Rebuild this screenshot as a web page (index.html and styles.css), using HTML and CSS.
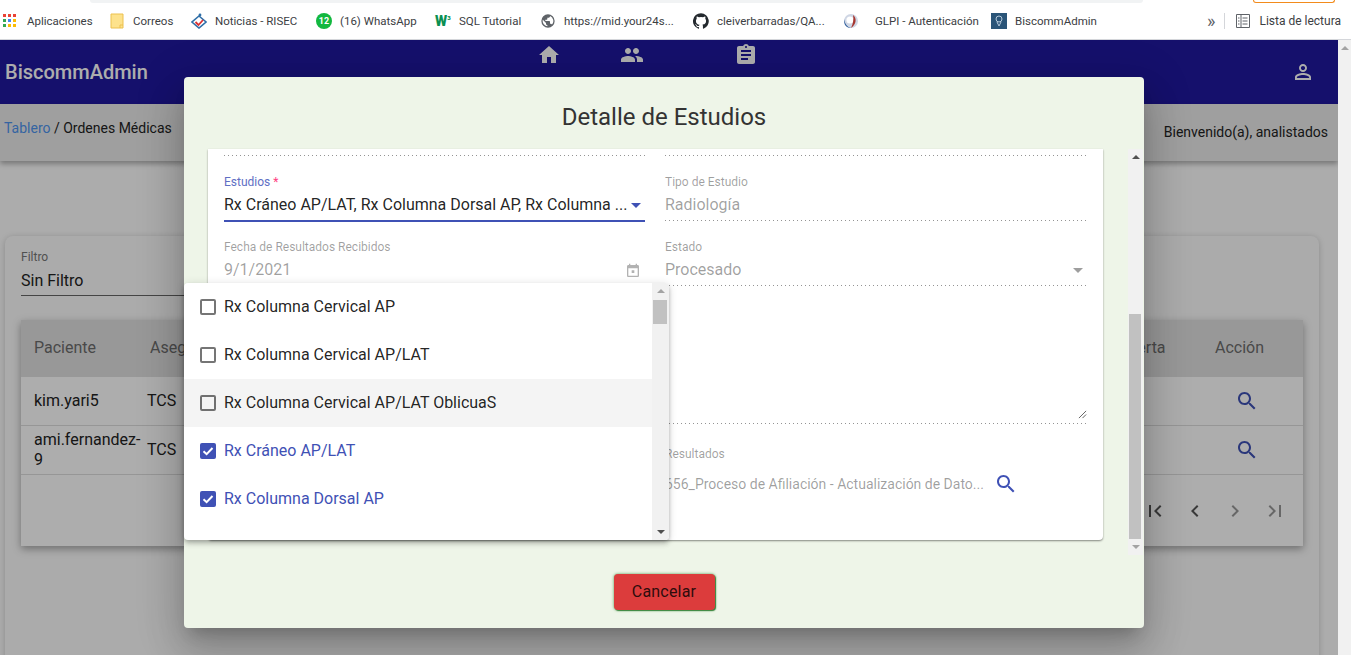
FILE: index.html
```html
<!DOCTYPE html>
<html lang="es">

<head>
  <meta charset="UTF-8" />
  <meta name="viewport" content="width=device-width, initial-scale=1.0" />
  <title>BiscommAdmin</title>
  <link rel="stylesheet" href="styles.css">
</head>

<body>
  <div class="top_strip">
    <div class="address_end"></div>
    <div class="profile_pill"></div>
  </div>

  <nav class="bookmarks">
    <a class="bookmark">
      <span class="apps_icon">
        <i class="r"></i><i class="r"></i><i class="r"></i>
        <i class="g"></i><i class="b"></i><i class="y"></i>
        <i class="g"></i><i class="y"></i><i class="y"></i>
      </span>
      Aplicaciones
    </a>
    <a class="bookmark">
      <svg class="favicon" viewBox="0 0 16 16">
        <path d="M2 1h12v14H2z" fill="#fde28c" stroke="#ecc14e" />
        <path d="M11 15v-3h3" fill="none" stroke="#ecc14e" />
      </svg>
      Correos
    </a>
    <a class="bookmark">
      <svg class="favicon" viewBox="0 0 16 16">
        <path d="M8 3 15 9 8 15 1 9z" fill="none" stroke="#2f6fa8" stroke-width="1.6" />
        <path d="M4.5 9l3 3 4.5-5" fill="none" stroke="#d33" stroke-width="1.8" />
        <circle cx="9" cy="2" r="1.4" fill="#2f6fa8" />
      </svg>
      Noticias - RISEC
    </a>
    <a class="bookmark">
      <span class="whatsapp_icon">12</span>
      (16) WhatsApp
    </a>
    <a class="bookmark">
      <span class="w3_icon">W<sup>3</sup></span>
      SQL Tutorial
    </a>
    <a class="bookmark">
      <svg class="favicon" viewBox="0 0 24 24">
        <path fill="#5f6368" d="M12 2a10 10 0 1 0 0 20 10 10 0 0 0 0-20zm-1 17.9A8 8 0 0 1 4.2 10.2L9 15v1c0 1.1.9 2 2 2v1.9zm6.9-2.5c-.3-.8-1-1.4-1.9-1.4h-1v-3c0-.6-.4-1-1-1H8v-2h2c.6 0 1-.4 1-1V7h2c1.1 0 2-.9 2-2v-.4a8 8 0 0 1 2.9 12.8z" />
      </svg>
      https://mid.your24s...
    </a>
    <a class="bookmark">
      <svg class="favicon" viewBox="0 0 24 24">
        <path fill="#24292e" d="M12 .3a12 12 0 0 0-3.8 23.4c.6.1.8-.3.8-.6v-2c-3.3.7-4-1.6-4-1.6-.5-1.4-1.3-1.8-1.3-1.8-1.1-.7.1-.7.1-.7 1.2.1 1.8 1.2 1.8 1.2 1.1 1.8 2.8 1.3 3.5 1 .1-.8.4-1.3.8-1.6-2.7-.3-5.5-1.3-5.5-6 0-1.2.5-2.3 1.2-3.1-.1-.4-.5-1.6.1-3.2 0 0 1-.3 3.3 1.2a11.5 11.5 0 0 1 6 0c2.3-1.5 3.3-1.2 3.3-1.2.6 1.6.2 2.8.1 3.2.8.8 1.2 1.9 1.2 3.1 0 4.6-2.8 5.6-5.5 5.9.4.4.8 1.1.8 2.2v3.3c0 .3.2.7.8.6A12 12 0 0 0 12 .3z" />
      </svg>
      cleiverbarradas/QA...
    </a>
    <a class="bookmark glpi">
      <svg class="favicon" viewBox="0 0 16 16">
        <circle cx="8" cy="8" r="7" fill="#cfd6e4" />
        <circle cx="7" cy="7" r="3.6" fill="#fff" />
        <path d="M10 2c4 3 3.500 9-2 13 2-4 3-9 2-13z" fill="#a8362f" />
        <path d="M1.500 6c0 5 3 8 6.500 9-4 .5-8-3.500-6.500-9z" fill="#2c5c9a" />
      </svg>
      GLPI - Autenticación
    </a>
    <a class="bookmark">
      <svg class="favicon" viewBox="0 0 16 16">
        <path d="M0 0h16v16H0z" fill="#2b5578" />
        <circle cx="8" cy="6" r="3" fill="none" stroke="#b7cadb" />
        <path d="M6 9l2 4 2-4" fill="none" stroke="#b7cadb" />
      </svg>
      BiscommAdmin
    </a>

    <div class="bookmarks_right">
      <span class="more_marks">»</span>
      <span class="marks_sep"></span>
      <a class="bookmark reading">
        <svg class="favicon" viewBox="0 0 16 16">
          <path d="M1.500 1.500h13v13h-13zM6 1.500v13M3 5h1.500M3 8h1.500M3 11h1.500M7.500 5h5M7.500 8h5M7.500 11h5" fill="none" stroke="#5f6368" />
        </svg>
        Lista de lectura
      </a>
    </div>
  </nav>

  <div class="window">
    <div class="app">
      <header class="toolbar">
        <span class="brand">BiscommAdmin</span>
        <div class="main_nav">
          <svg class="icon nav_home" viewBox="0 0 24 24"><path d="M10 20v-6h4v6h5v-8h3L12 3 2 12h3v8z" /></svg>
          <svg class="icon nav_people" viewBox="0 0 24 24"><path d="M16 11c1.66 0 2.99-1.34 2.99-3S17.66 5 16 5c-1.66 0-3 1.34-3 3s1.34 3 3 3zm-8 0c1.66 0 2.99-1.34 2.99-3S9.66 5 8 5C6.34 5 5 6.34 5 8s1.34 3 3 3zm0 2c-2.33 0-7 1.17-7 3.5V19h14v-2.5c0-2.33-4.67-3.5-7-3.5zm8 0c-.29 0-.62.02-.97.05 1.16.84 1.97 1.97 1.97 3.45V19h6v-2.5c0-2.33-4.67-3.5-7-3.5z" /></svg>
          <svg class="icon nav_orders" viewBox="0 0 24 24"><path d="M19 3h-4.18C14.4 1.84 13.3 1 12 1c-1.3 0-2.4.84-2.82 2H5c-1.1 0-2 .9-2 2v14c0 1.1.9 2 2 2h14c1.1 0 2-.9 2-2V5c0-1.1-.9-2-2-2zm-7 0c.55 0 1 .45 1 1s-.45 1-1 1-1-.45-1-1 .45-1 1-1zm2 14H7v-2h7v2zm3-4H7v-2h10v2zm0-4H7V7h10v2z" /></svg>
        </div>
        <svg class="icon user_icon" viewBox="0 0 24 24"><path d="M12 5.900c1.160 0 2.100.940 2.100 2.100s-.940 2.100-2.100 2.100S9.900 9.160 9.900 8s.940-2.100 2.100-2.100m0 9c2.970 0 6.100 1.460 6.100 2.100v1.100H5.900V17c0-.640 3.130-2.100 6.100-2.100M12 4C9.790 4 8 5.790 8 8s1.790 4 4 4 4-1.790 4-4-1.790-4-4-4zm0 9c-2.670 0-8 1.340-8 4v3h16v-3c0-2.660-5.330-4-8-4z" /></svg>
      </header>

      <div class="crumbs">
        <p class="crumb_path"><a>Tablero</a> / Ordenes Médicas</p>
        <p class="welcome">Bienvenido(a), analistados</p>
      </div>

      <main class="content">
        <section class="card">
          <div class="filter">
            <label>Filtro</label>
            <p>Sin Filtro</p>
          </div>

          <div class="table_panel">
            <div class="row row_head">
              <span class="cell_name">Paciente</span>
              <span class="cell_ins">Asegurador</span>
              <span>Alerta</span>
              <span>Acción</span>
            </div>
            <div class="row">
              <span class="cell_name">kim.yari5</span>
              <span>TCS</span>
              <span></span>
              <svg class="icon search_icon" viewBox="0 0 24 24"><path d="M15.500 14h-.790l-.280-.270C15.410 12.590 16 11.110 16 9.500 16 5.910 13.090 3 9.500 3S3 5.910 3 9.500 5.910 16 9.500 16c1.610 0 3.090-.590 4.230-1.570l.270.280v.790l5 4.990L20.490 19l-4.990-5zm-6 0C7.010 14 5 11.990 5 9.500S7.010 5 9.500 5 14 7.010 14 9.500 11.990 14 9.500 14z" /></svg>
            </div>
            <div class="row">
              <span class="cell_name">ami.fernandez-9</span>
              <span>TCS</span>
              <span></span>
              <svg class="icon search_icon" viewBox="0 0 24 24"><path d="M15.500 14h-.790l-.280-.270C15.410 12.590 16 11.110 16 9.500 16 5.910 13.090 3 9.500 3S3 5.910 3 9.500 5.910 16 9.500 16c1.610 0 3.090-.590 4.230-1.570l.270.280v.790l5 4.990L20.490 19l-4.990-5zm-6 0C7.010 14 5 11.990 5 9.500S7.010 5 9.500 5 14 7.010 14 9.500 11.990 14 9.500 14z" /></svg>
            </div>
            <div class="pager">
              <svg class="icon" viewBox="0 0 24 24"><path d="M18.410 16.590L13.820 12l4.590-4.590L17 6l-6 6 6 6zM6 6h2v12H6z" /></svg>
              <svg class="icon" viewBox="0 0 24 24"><path d="M15.410 7.410L14 6l-6 6 6 6 1.410-1.410L10.830 12z" /></svg>
              <svg class="icon off" viewBox="0 0 24 24"><path d="M10 6L8.590 7.410 13.170 12l-4.580 4.590L10 18l6-6z" /></svg>
              <svg class="icon off" viewBox="0 0 24 24"><path d="M5.590 7.410L10.180 12l-4.590 4.590L7 18l6-6-6-6zM16 6h2v12h-2z" /></svg>
            </div>
          </div>
        </section>
      </main>

      <div class="backdrop"></div>

      <div class="modal">
        <h2 class="modal_title">Detalle de Estudios</h2>

        <div class="modal_body">
          <form class="form_card">
            <div class="field off_field line_only"></div>
            <div class="field off_field line_only"></div>

            <div class="field active">
              <label>Estudios <b>*</b></label>
              <div class="value">
                <span class="value_text">Rx Cráneo AP/LAT, Rx Columna Dorsal AP, Rx Columna ...</span>
                <i class="arrow"></i>
              </div>
            </div>
            <div class="field off_field">
              <label>Tipo de Estudio</label>
              <div class="value"><span class="value_text">Radiología</span></div>
            </div>

            <div class="field off_field">
              <label>Fecha de Resultados Recibidos</label>
              <div class="value">
                <span class="value_text">9/1/2021</span>
                <svg class="cal_icon" viewBox="0 0 24 24"><path d="M19 3h-1V1h-2v2H8V1H6v2H5c-1.110 0-1.990.900-1.990 2L3 19c0 1.100.890 2 2 2h14c1.100 0 2-.900 2-2V5c0-1.100-.900-2-2-2zm0 16H5V8h14v11zM10 11h4v4h-4z" /></svg>
              </div>
            </div>
            <div class="field off_field">
              <label>Estado</label>
              <div class="value">
                <span class="value_text">Procesado</span>
                <i class="arrow"></i>
              </div>
            </div>

            <div class="field off_field area_field"></div>
            <div class="field off_field area_field">
              <svg class="resize_grip" viewBox="0 0 10 10"><path d="M1 9 9 1M5 9 9 5" stroke="#555" fill="none" /></svg>
            </div>

            <div class="results_left"></div>
            <div class="results">
              <label>Resultados</label>
              <div class="results_value">
                <span>656_Proceso de Afiliación - Actualización de Dato...</span>
                <svg class="icon result_search" viewBox="0 0 24 24"><path d="M15.500 14h-.790l-.280-.270C15.410 12.590 16 11.110 16 9.500 16 5.910 13.090 3 9.500 3S3 5.910 3 9.500 5.910 16 9.500 16c1.610 0 3.090-.590 4.230-1.570l.270.280v.790l5 4.990L20.490 19l-4.990-5zm-6 0C7.010 14 5 11.990 5 9.500S7.010 5 9.500 5 14 7.010 14 9.500 11.990 14 9.500 14z" /></svg>
              </div>
            </div>
          </form>

          <div class="scrollbar modal_scroll">
            <i class="sb_up"></i>
            <i class="sb_thumb"></i>
            <i class="sb_down"></i>
          </div>
        </div>

        <div class="modal_actions">
          <button class="cancel" type="button">Cancelar</button>
        </div>

        <div class="dropdown">
          <div class="options">
            <div class="option">
              <span class="check"></span>Rx Columna Cervical AP
            </div>
            <div class="option">
              <span class="check"></span>Rx Columna Cervical AP/LAT
            </div>
            <div class="option hovered">
              <span class="check"></span>Rx Columna Cervical AP/LAT OblicuaS
            </div>
            <div class="option selected">
              <span class="check"><svg viewBox="0 0 16 16"><path d="M3.500 8.200 6.600 11.200 12.500 5" fill="none" stroke="#fff" stroke-width="2" /></svg></span>Rx Cráneo AP/LAT
            </div>
            <div class="option selected">
              <span class="check"><svg viewBox="0 0 16 16"><path d="M3.500 8.200 6.600 11.200 12.500 5" fill="none" stroke="#fff" stroke-width="2" /></svg></span>Rx Columna Dorsal AP
            </div>
          </div>
          <div class="scrollbar drop_scroll">
            <i class="sb_up"></i>
            <i class="sb_thumb"></i>
            <i class="sb_down"></i>
          </div>
        </div>
      </div>
    </div>

    <div class="scrollbar page_scroll">
      <i class="sb_up"></i>
    </div>
  </div>
</body>

</html>
```

FILE: styles.css
```css
* {
  box-sizing: border-box;
}

body {
  margin: 0;
  padding: 0;
  height: 655px;
  overflow: hidden;
  display: flex;
  flex-direction: column;
  background: #fff;
  font-family: Roboto, "Liberation Sans", sans-serif;
}

p {
  margin: 0;
}

/* browser chrome */

.top_strip {
  height: 3px;
  display: flex;
  overflow: hidden;
}

.address_end {
  margin-left: 90px;
  width: 1053px;
  height: 3px;
  background: #f1f3f4;
  border-radius: 0 0 12px 12px;
}

.profile_pill {
  margin-left: 110px;
  width: 82px;
  height: 3px;
  border: solid 1px #f28b1c;
  border-top: none;
  border-radius: 0 0 8px 8px;
}

.bookmarks {
  height: 37px;
  display: grid;
  grid-template-columns: 106px 82px 125px 119px 105px 153px 150px 148px 100px 1fr;
  align-items: center;
  padding: 0 10px 1px 3px;
  border-bottom: solid 1px #d4d6da;
  font-size: 11.5px;
  color: #3c4043;
}

.bookmark {
  display: flex;
  align-items: center;
  gap: 8px;
  white-space: nowrap;
}

.glpi {
  gap: 16px;
}

.favicon {
  width: 16px;
  height: 16px;
  flex: none;
}

.apps_icon {
  width: 16px;
  height: 13px;
  display: grid;
  grid-template-columns: repeat(3, 3px);
  grid-auto-rows: 3px;
  gap: 2px;
}

.apps_icon .r { background: #ea4335; }
.apps_icon .g { background: #34a853; }
.apps_icon .b { background: #4285f4; }
.apps_icon .y { background: #fbbc05; }

.whatsapp_icon {
  width: 16px;
  height: 16px;
  border-radius: 50%;
  background: #12b83f;
  color: #fff;
  font-size: 9px;
  font-weight: 700;
  line-height: 16px;
  text-align: center;
}

.w3_icon {
  width: 16px;
  color: #0a8f52;
  font-size: 14px;
  font-weight: 900;
  line-height: 16px;
  white-space: nowrap;
}

.w3_icon sup {
  font-size: 6px;
  line-height: 0;
}

.bookmarks_right {
  justify-self: end;
  display: flex;
  align-items: center;
}

.more_marks {
  font-size: 18px;
  color: #5f6368;
  line-height: 16px;
}

.marks_sep {
  width: 1px;
  height: 16px;
  margin: 0 10px 0 9px;
  background: #d4d6da;
}

.reading {
  font-size: 12px;
}

.window {
  flex: 1;
  min-height: 0;
  display: flex;
}

.app {
  position: relative;
  flex: 1;
  min-width: 0;
  display: flex;
  flex-direction: column;
  background: #fefefe;
  overflow: hidden;
}

/* page under the dialog */

.toolbar {
  height: 64px;
  flex: none;
  display: flex;
  align-items: center;
  padding: 0 24px 0 5px;
  background: #2018a0;
  color: #fff;
}

.brand {
  font-size: 20px;
  font-weight: 500;
}

.icon {
  width: 24px;
  height: 24px;
  flex: none;
  fill: currentColor;
}

.main_nav {
  align-self: flex-start;
  margin-top: 3px;
  display: flex;
}

.nav_home {
  margin-left: 389px;
}

.nav_people {
  margin-left: 59px;
}

.nav_orders {
  margin-left: 90px;
}

.user_icon {
  margin-left: auto;
  margin-right: -1px;
}

.crumbs {
  height: 57px;
  flex: none;
  display: flex;
  justify-content: space-between;
  padding: 0 10px 0 4px;
  background: #ebebeb;
  box-shadow: 0 3px 5px rgba(0, 0, 0, 0.3);
  font-size: 14px;
  color: #222;
  position: relative;
}

.crumb_path {
  margin-top: 16px;
}

.crumb_path a {
  color: #4f94ee;
}

.welcome {
  margin-top: 20px;
}

.content {
  flex: 1;
  padding: 75px 19px 0 5px;
}

.card {
  height: 500px;
  padding: 14px 16px;
  background: #fcfcfc;
  border-radius: 8px;
  box-shadow: 0 1px 6px rgba(0, 0, 0, 0.2);
}

.filter {
  width: 400px;
  height: 46px;
  border-bottom: solid 1px #666;
  color: #222;
}

.filter label {
  display: block;
  font-size: 12px;
  line-height: 14px;
  color: #777;
}

.filter p {
  margin-top: 7px;
  font-size: 16px;
  line-height: 20px;
}

.table_panel {
  margin-top: 24px;
  background: #fff;
  box-shadow: 0 3px 8px rgba(0, 0, 0, 0.35);
}

.row {
  height: 49px;
  display: grid;
  grid-template-columns: 126px 976px 92px 1fr;
  align-items: center;
  font-size: 16px;
  line-height: 20px;
  color: #222;
  border-bottom: solid 1px #ddd;
}

.row_head {
  height: 57px;
  padding-bottom: 2px;
  background: #e1e1e1;
  border-bottom: none;
  color: #6c6c6c;
}

.cell_name {
  padding: 0 4px 0 13px;
  overflow-wrap: anywhere;
}

.cell_ins {
  padding-left: 3px;
}

.search_icon {
  margin-left: 20px;
  color: #3f51b5;
}

.pager {
  height: 71px;
  padding-right: 16px;
  display: flex;
  justify-content: flex-end;
  align-items: center;
  gap: 16px;
  color: #555;
}

.pager .off {
  color: #999;
}

.backdrop {
  position: absolute;
  inset: 0;
  background: rgba(0, 0, 0, 0.32);
}

/* dialog */

.modal {
  position: absolute;
  top: 37px;
  left: 184px;
  width: 960px;
  height: 551px;
  background: #eef5e8;
  border-radius: 4px;
  box-shadow: 0 11px 15px -7px rgba(0, 0, 0, 0.2), 0 24px 38px 3px rgba(0, 0, 0, 0.14), 0 9px 46px 8px rgba(0, 0, 0, 0.12);
}

.modal_title {
  height: 72px;
  margin: 0;
  padding-top: 24px;
  text-align: center;
  font-size: 24px;
  font-weight: 400;
  line-height: 32px;
  color: #333;
}

.modal_body {
  height: 406px;
  display: flex;
  align-items: flex-start;
  padding-left: 24px;
  gap: 25px;
}

.form_card {
  width: 895px;
  height: 391px;
  padding: 0 16px;
  display: grid;
  grid-template-columns: 421px 422px;
  grid-template-rows: 7px 65px 65px 138px 1fr;
  column-gap: 20px;
  background: #fff;
  border-radius: 0 0 4px 4px;
  box-shadow: 0 1px 2px rgba(0, 0, 0, 0.45);
}

.field {
  position: relative;
  padding-top: 19px;
  background-position: left bottom;
  background-repeat: repeat-x;
}

.off_field {
  background-image: linear-gradient(to right, rgba(0, 0, 0, 0.42) 0%, rgba(0, 0, 0, 0.42) 33%, transparent 0%);
  background-size: 4px 1px;
}

.line_only {
  padding: 0;
}

.field label,
.results label {
  display: block;
  font-size: 12px;
  line-height: 14px;
  color: rgba(0, 0, 0, 0.38);
}

.value {
  display: flex;
  align-items: center;
  height: 20px;
  margin-top: 6px;
  font-size: 16px;
  line-height: 20px;
  color: rgba(0, 0, 0, 0.38);
}

.value_text {
  flex: 1;
  min-width: 0;
  white-space: nowrap;
}

.arrow {
  flex: none;
  margin: 1px 4px 0 0;
  border-left: solid 5px transparent;
  border-right: solid 5px transparent;
  border-top: solid 5px rgba(0, 0, 0, 0.38);
}

.active {
  margin-bottom: -1px;
  border-bottom: solid 2px #3f51b5;
}

.active label {
  color: #5f6fc4;
}

.active label b {
  font-weight: 400;
  color: #ff4081;
}

.active .value {
  color: rgba(0, 0, 0, 0.87);
}

.active .arrow {
  border-top-color: #3f51b5;
}

.cal_icon {
  width: 16px;
  height: 16px;
  margin: 2px 4px 0 0;
  fill: rgba(0, 0, 0, 0.3);
}

.resize_grip {
  position: absolute;
  right: 0;
  bottom: 5px;
  width: 9px;
  height: 9px;
}

.results {
  padding-top: 23px;
}

.results_value {
  display: flex;
  align-items: center;
  margin-top: 11px;
  font-size: 14px;
  color: rgba(0, 0, 0, 0.38);
  white-space: nowrap;
}

.result_search {
  margin-left: 10px;
  color: #3f51b5;
}

.modal_actions {
  display: flex;
  justify-content: center;
  padding-top: 19px;
}

.cancel {
  width: 101px;
  height: 36px;
  padding: 0 0 2px;
  border: none;
  border-radius: 4px;
  background: #dc3c3c;
  box-shadow: 0 0 3px #4c9a4c, 1px 1px 1px #2f7a32;
  font-family: Roboto, "Liberation Sans", sans-serif;
  font-size: 16px;
  font-weight: 400;
  letter-spacing: 0.2px;
  color: #2e0c0c;
}

/* select panel */

.dropdown {
  position: absolute;
  top: 206px;
  left: 0;
  width: 485px;
  height: 257px;
  display: flex;
  background: #fff;
  border-radius: 4px;
  box-shadow: 0 2px 4px -1px rgba(0, 0, 0, 0.2), 0 4px 5px rgba(0, 0, 0, 0.14), 0 1px 10px rgba(0, 0, 0, 0.12);
  overflow: hidden;
}

.options {
  flex: 1;
}

.option {
  height: 48px;
  display: flex;
  align-items: center;
  gap: 8px;
  padding: 0 0 1px 16px;
  font-size: 16px;
  color: rgba(0, 0, 0, 0.87);
}

.hovered {
  background: #f4f4f4;
}

.selected {
  color: #3f51b5;
}

.check {
  width: 16px;
  height: 16px;
  flex: none;
  margin-top: 1px;
  border: solid 2px rgba(0, 0, 0, 0.54);
  border-radius: 2px;
}

.selected .check {
  border: none;
  background: #3f51b5;
}

.check svg {
  display: block;
}

/* scrollbars */

.scrollbar {
  position: relative;
  flex: none;
  background: #f1f1f1;
}

.sb_up,
.sb_down {
  position: absolute;
  left: 50%;
  margin-left: -4px;
  border-left: solid 4px transparent;
  border-right: solid 4px transparent;
}

.sb_up {
  top: 6px;
  border-bottom: solid 4px #505050;
}

.sb_down {
  bottom: 6px;
  border-top: solid 4px #505050;
}

.sb_thumb {
  position: absolute;
  left: 1px;
  right: 2px;
  background: #c1c1c1;
}

.modal_scroll {
  width: 15px;
  height: 406px;
}

.modal_scroll .sb_thumb {
  top: 165px;
  height: 225px;
}

.modal_scroll .sb_down {
  border-top-color: #a3a3a3;
}

.drop_scroll {
  width: 17px;
  height: 100%;
}

.drop_scroll .sb_up {
  border-bottom-color: #a3a3a3;
}

.drop_scroll .sb_thumb {
  top: 17px;
  height: 24px;
}

.page_scroll {
  width: 13px;
}

.page_scroll .sb_up {
  border-bottom-color: #a3a3a3;
}
```
